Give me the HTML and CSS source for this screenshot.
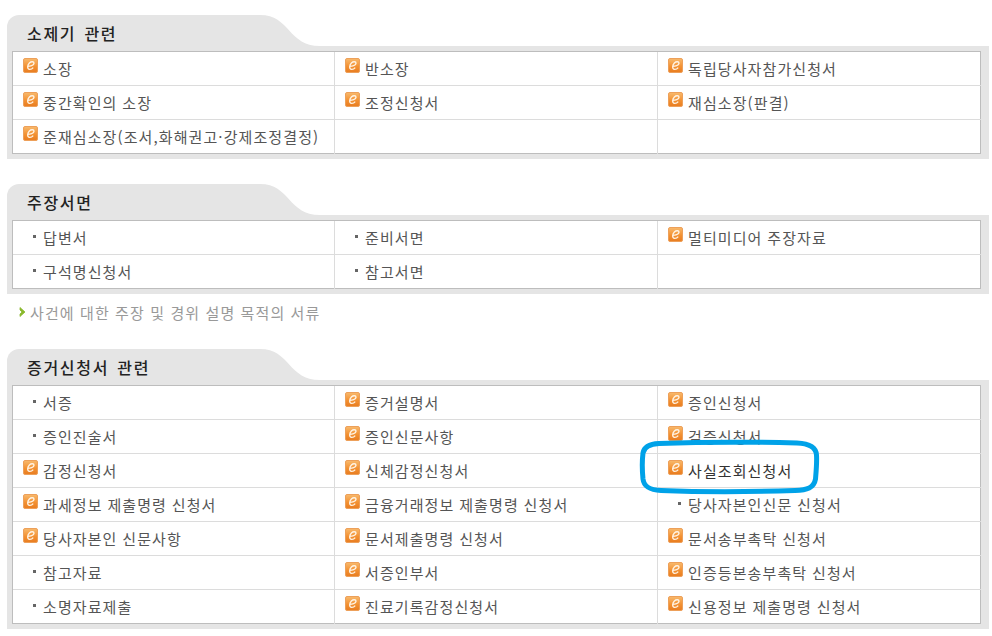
FILE: index.html
```html
<!DOCTYPE html>
<html lang="ko">
<head>
<meta charset="utf-8">
<title>서류 목록</title>
<link rel="stylesheet" href="styles.css">
</head>
<body>
<svg class="defs" width="0" height="0" aria-hidden="true">
  <defs>
    <linearGradient id="og" x1="0" y1="0" x2="0" y2="1">
      <stop offset="0" stop-color="#f8ba6e"/>
      <stop offset="0.55" stop-color="#f39233"/>
      <stop offset="1" stop-color="#e87c20"/>
    </linearGradient>
    <symbol id="e-icon" viewBox="0 0 15 15">
      <rect x="0.5" y="0.5" width="14" height="14" rx="1.5" fill="url(#og)" stroke="#eda05a"/>
      <path d="M4.4 8.3 C7 8.4 11 7.4 11 5.2 C11 3.4 8.2 3.2 6.4 5 C4.4 7 3.8 11.2 6.6 11.4 C8 11.5 9.4 10.6 10.2 9.6" fill="none" stroke="#fff3e4" stroke-width="1.4"/>
    </symbol>
  </defs>
</svg>

<main class="page">
  <section class="group">
    <header class="head">
      <h2 class="tab">소제기 관련</h2>
      <svg class="curve" width="60" height="31" viewBox="0 0 60 31" aria-hidden="true"><path d="M0 0 C30 0 28 31 60 31 L0 31 Z" fill="#e5e5e5"/></svg>
    </header>
    <div class="body">
      <table class="docs">
        <tr>
          <td><span class="item"><svg class="ico"><use href="#e-icon"/></svg>소장</span></td>
          <td><span class="item"><svg class="ico"><use href="#e-icon"/></svg>반소장</span></td>
          <td><span class="item"><svg class="ico"><use href="#e-icon"/></svg>독립당사자참가신청서</span></td>
        </tr>
        <tr>
          <td><span class="item"><svg class="ico"><use href="#e-icon"/></svg>중간확인의 소장</span></td>
          <td><span class="item"><svg class="ico"><use href="#e-icon"/></svg>조정신청서</span></td>
          <td><span class="item"><svg class="ico"><use href="#e-icon"/></svg>재심소장(판결)</span></td>
        </tr>
        <tr>
          <td><span class="item"><svg class="ico"><use href="#e-icon"/></svg>준재심소장(조서,화해권고·강제조정결정)</span></td>
          <td></td>
          <td></td>
        </tr>
      </table>
    </div>
  </section>

  <section class="group tight">
    <header class="head">
      <h2 class="tab">주장서면</h2>
      <svg class="curve" width="60" height="31" viewBox="0 0 60 31" aria-hidden="true"><path d="M0 0 C30 0 28 31 60 31 L0 31 Z" fill="#e5e5e5"/></svg>
    </header>
    <div class="body">
      <table class="docs">
        <tr>
          <td><span class="item plain">답변서</span></td>
          <td><span class="item plain">준비서면</span></td>
          <td><span class="item"><svg class="ico"><use href="#e-icon"/></svg>멀티미디어 주장자료</span></td>
        </tr>
        <tr>
          <td><span class="item plain">구석명신청서</span></td>
          <td><span class="item plain">참고서면</span></td>
          <td></td>
        </tr>
      </table>
    </div>
  </section>

  <p class="note"><svg class="chev" width="7" height="10" viewBox="0 0 7 10" aria-hidden="true"><path d="M1 0.5 L6 5 L1 9.5 L1 7 L3 5 L1 3 Z" fill="#8ab92d" stroke="#8ab92d" stroke-width="0.8"/></svg>사건에 대한 주장 및 경위 설명 목적의 서류</p>

  <section class="group last">
    <header class="head">
      <h2 class="tab">증거신청서 관련</h2>
      <svg class="curve" width="60" height="31" viewBox="0 0 60 31" aria-hidden="true"><path d="M0 0 C30 0 28 31 60 31 L0 31 Z" fill="#e5e5e5"/></svg>
    </header>
    <div class="body">
      <table class="docs">
        <tr>
          <td><span class="item plain">서증</span></td>
          <td><span class="item"><svg class="ico"><use href="#e-icon"/></svg>증거설명서</span></td>
          <td><span class="item"><svg class="ico"><use href="#e-icon"/></svg>증인신청서</span></td>
        </tr>
        <tr>
          <td><span class="item plain">증인진술서</span></td>
          <td><span class="item"><svg class="ico"><use href="#e-icon"/></svg>증인신문사항</span></td>
          <td><span class="item"><svg class="ico"><use href="#e-icon"/></svg>검증신청서</span></td>
        </tr>
        <tr>
          <td><span class="item"><svg class="ico"><use href="#e-icon"/></svg>감정신청서</span></td>
          <td><span class="item"><svg class="ico"><use href="#e-icon"/></svg>신체감정신청서</span></td>
          <td><span class="item strong"><svg class="ico"><use href="#e-icon"/></svg>사실조회신청서</span></td>
        </tr>
        <tr>
          <td><span class="item"><svg class="ico"><use href="#e-icon"/></svg>과세정보 제출명령 신청서</span></td>
          <td><span class="item"><svg class="ico"><use href="#e-icon"/></svg>금융거래정보 제출명령 신청서</span></td>
          <td><span class="item plain">당사자본인신문 신청서</span></td>
        </tr>
        <tr>
          <td><span class="item"><svg class="ico"><use href="#e-icon"/></svg>당사자본인 신문사항</span></td>
          <td><span class="item"><svg class="ico"><use href="#e-icon"/></svg>문서제출명령 신청서</span></td>
          <td><span class="item"><svg class="ico"><use href="#e-icon"/></svg>문서송부촉탁 신청서</span></td>
        </tr>
        <tr>
          <td><span class="item plain">참고자료</span></td>
          <td><span class="item"><svg class="ico"><use href="#e-icon"/></svg>서증인부서</span></td>
          <td><span class="item"><svg class="ico"><use href="#e-icon"/></svg>인증등본송부촉탁 신청서</span></td>
        </tr>
        <tr>
          <td><span class="item plain">소명자료제출</span></td>
          <td><span class="item"><svg class="ico"><use href="#e-icon"/></svg>진료기록감정신청서</span></td>
          <td><span class="item"><svg class="ico"><use href="#e-icon"/></svg>신용정보 제출명령 신청서</span></td>
        </tr>
      </table>
    </div>
    <svg class="mark" width="184" height="58" viewBox="0 0 184 58" aria-hidden="true">
      <path d="M20 4.5 C60 3 120 3 158 4 C170 4.5 177 8 177.5 16 C178 24 177 34 176.5 40 C175 49 168 51 156 51.5 C110 53 60 53 22 51.5 C11 51 5 48 4 40 C3 30 3 22 4 14 C5 8 10 5 20 4.5 Z" fill="none" stroke="#00a2e8" stroke-width="5"/>
    </svg>
  </section>
</main>
</body>
</html>
```

FILE: styles.css
```css
* { box-sizing: border-box; }

html, body { margin: 0; padding: 0; background: #fff; }

body {
  font-family: "Noto Sans CJK KR", "Noto Sans", sans-serif;
  font-size: 15px;
  letter-spacing: 1.1px;
  word-spacing: -0.5px;
  color: #555;
  overflow: hidden;
}

.defs { position: absolute; }

.page { padding: 15px 3px 0 7px; }

.group { position: relative; margin-bottom: 25px; }
.group.tight { margin-bottom: 4px; }
.group.last { margin-bottom: 0; }

.head { display: flex; height: 31px; }

.tab {
  margin: 0;
  width: 253px;
  height: 31px;
  padding: 8px 0 0 20px;
  background: #e5e5e5;
  border-top-left-radius: 12px;
  font-size: 16px;
  font-weight: 500;
  line-height: 20px;
  letter-spacing: 1.7px;
  word-spacing: 2px;
  white-space: nowrap;
  color: #222;
}

.curve { display: block; flex: none; }

.body {
  background: #e5e5e5;
  padding: 5px 8px 5px 5px;
}

.docs {
  width: 969px;
  table-layout: fixed;
  border-collapse: collapse;
  background: #fff;
  border: 1px solid #bdbdbd;
}

.docs td {
  height: 34px;
  padding: 0;
  border-top: 1px solid #dcdcdc;
  border-left: 1px solid #dcdcdc;
  vertical-align: middle;
}

.docs tr:first-child td { border-top-color: #bdbdbd; }
.docs td:first-child { border-left-color: #bdbdbd; width: 322px; }

.item {
  display: flex;
  align-items: center;
  height: 33px;
  padding-left: 10px;
  line-height: 20px;
  white-space: nowrap;
}

.item.strong { color: #333; }

.item.plain { padding-left: 20px; }
.item.plain::before {
  content: "";
  flex: none;
  width: 3px;
  height: 3px;
  margin-right: 7px;
  margin-top: -2px;
  background: #666;
}

.ico {
  flex: none;
  width: 15px;
  height: 15px;
  margin-right: 5px;
  margin-top: -7px;
}

.note {
  display: flex;
  align-items: center;
  height: 30px;
  margin: 0 0 21px 12px;
  padding-bottom: 2px;
  color: #999;
  word-spacing: 0;
  white-space: nowrap;
}

.chev { flex: none; margin-right: 4px; }

.mark {
  position: absolute;
  left: 632px;
  top: 90px;
}
```
